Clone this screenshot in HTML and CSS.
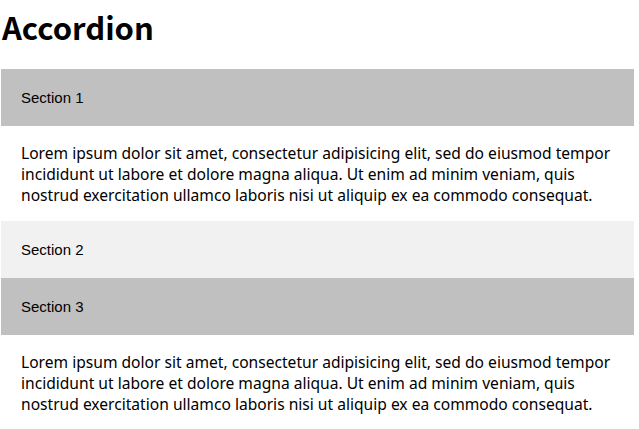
FILE: index.html
```html
<!DOCTYPE html>
<html>
<head>
<meta charset="utf-8">
<link rel="stylesheet" href="styles.css">
</head>
<body>
<div class="page">
  <h1 class="title">Accordion</h1>
  <div class="accordion">
    <button class="acc-btn active">Section 1</button>
    <div class="panel open">
      <p>Lorem ipsum dolor sit amet, consectetur adipisicing elit, sed do eiusmod tempor incididunt ut labore et dolore magna aliqua. Ut enim ad minim veniam, quis nostrud exercitation ullamco laboris nisi ut aliquip ex ea commodo consequat.</p>
    </div>
    <button class="acc-btn">Section 2</button>
    <div class="panel">
      <p>Lorem ipsum dolor sit amet, consectetur adipisicing elit, sed do eiusmod tempor incididunt ut labore et dolore magna aliqua. Ut enim ad minim veniam, quis nostrud exercitation ullamco laboris nisi ut aliquip ex ea commodo consequat.</p>
    </div>
    <button class="acc-btn active">Section 3</button>
    <div class="panel open">
      <p>Lorem ipsum dolor sit amet, consectetur adipisicing elit, sed do eiusmod tempor incididunt ut labore et dolore magna aliqua. Ut enim ad minim veniam, quis nostrud exercitation ullamco laboris nisi ut aliquip ex ea commodo consequat.</p>
    </div>
  </div>
</div>
</body>
</html>
```
FILE: styles.css
```css
html, body {
  margin: 0;
  padding: 0;
  background: #fff;
}
body {
  font-family: "Noto Sans", "Noto Sans CJK KR", sans-serif;
  color: #000;
}
.page {
  padding: 0 5px 0 1px;
}
.title {
  font-family: "Noto Sans CJK KR", "Noto Sans", sans-serif;
  font-size: 31px;
  font-weight: 700;
  line-height: 44px;
  margin: 5px 0 20px 1px;
}
.accordion {
  display: flex;
  flex-direction: column;
}
.acc-btn {
  display: block;
  width: 100%;
  border: none;
  outline: none;
  text-align: left;
  background: #f1f1f1;
  color: #000;
  font-family: "Liberation Sans", Arial, sans-serif;
  font-size: 15px;
  line-height: 17px;
  padding: 20px;
  margin: 0;
  cursor: pointer;
}
.acc-btn.active {
  background: #c0c0c0;
}
.panel {
  display: none;
  padding: 0 20px;
  background: #fff;
}
.panel.open {
  display: block;
}
.panel p {
  margin: 17px 0 15px;
  font-family: "Noto Sans", "Noto Sans CJK KR", sans-serif;
  font-size: 15.6px;
  line-height: 21px;
}
```
